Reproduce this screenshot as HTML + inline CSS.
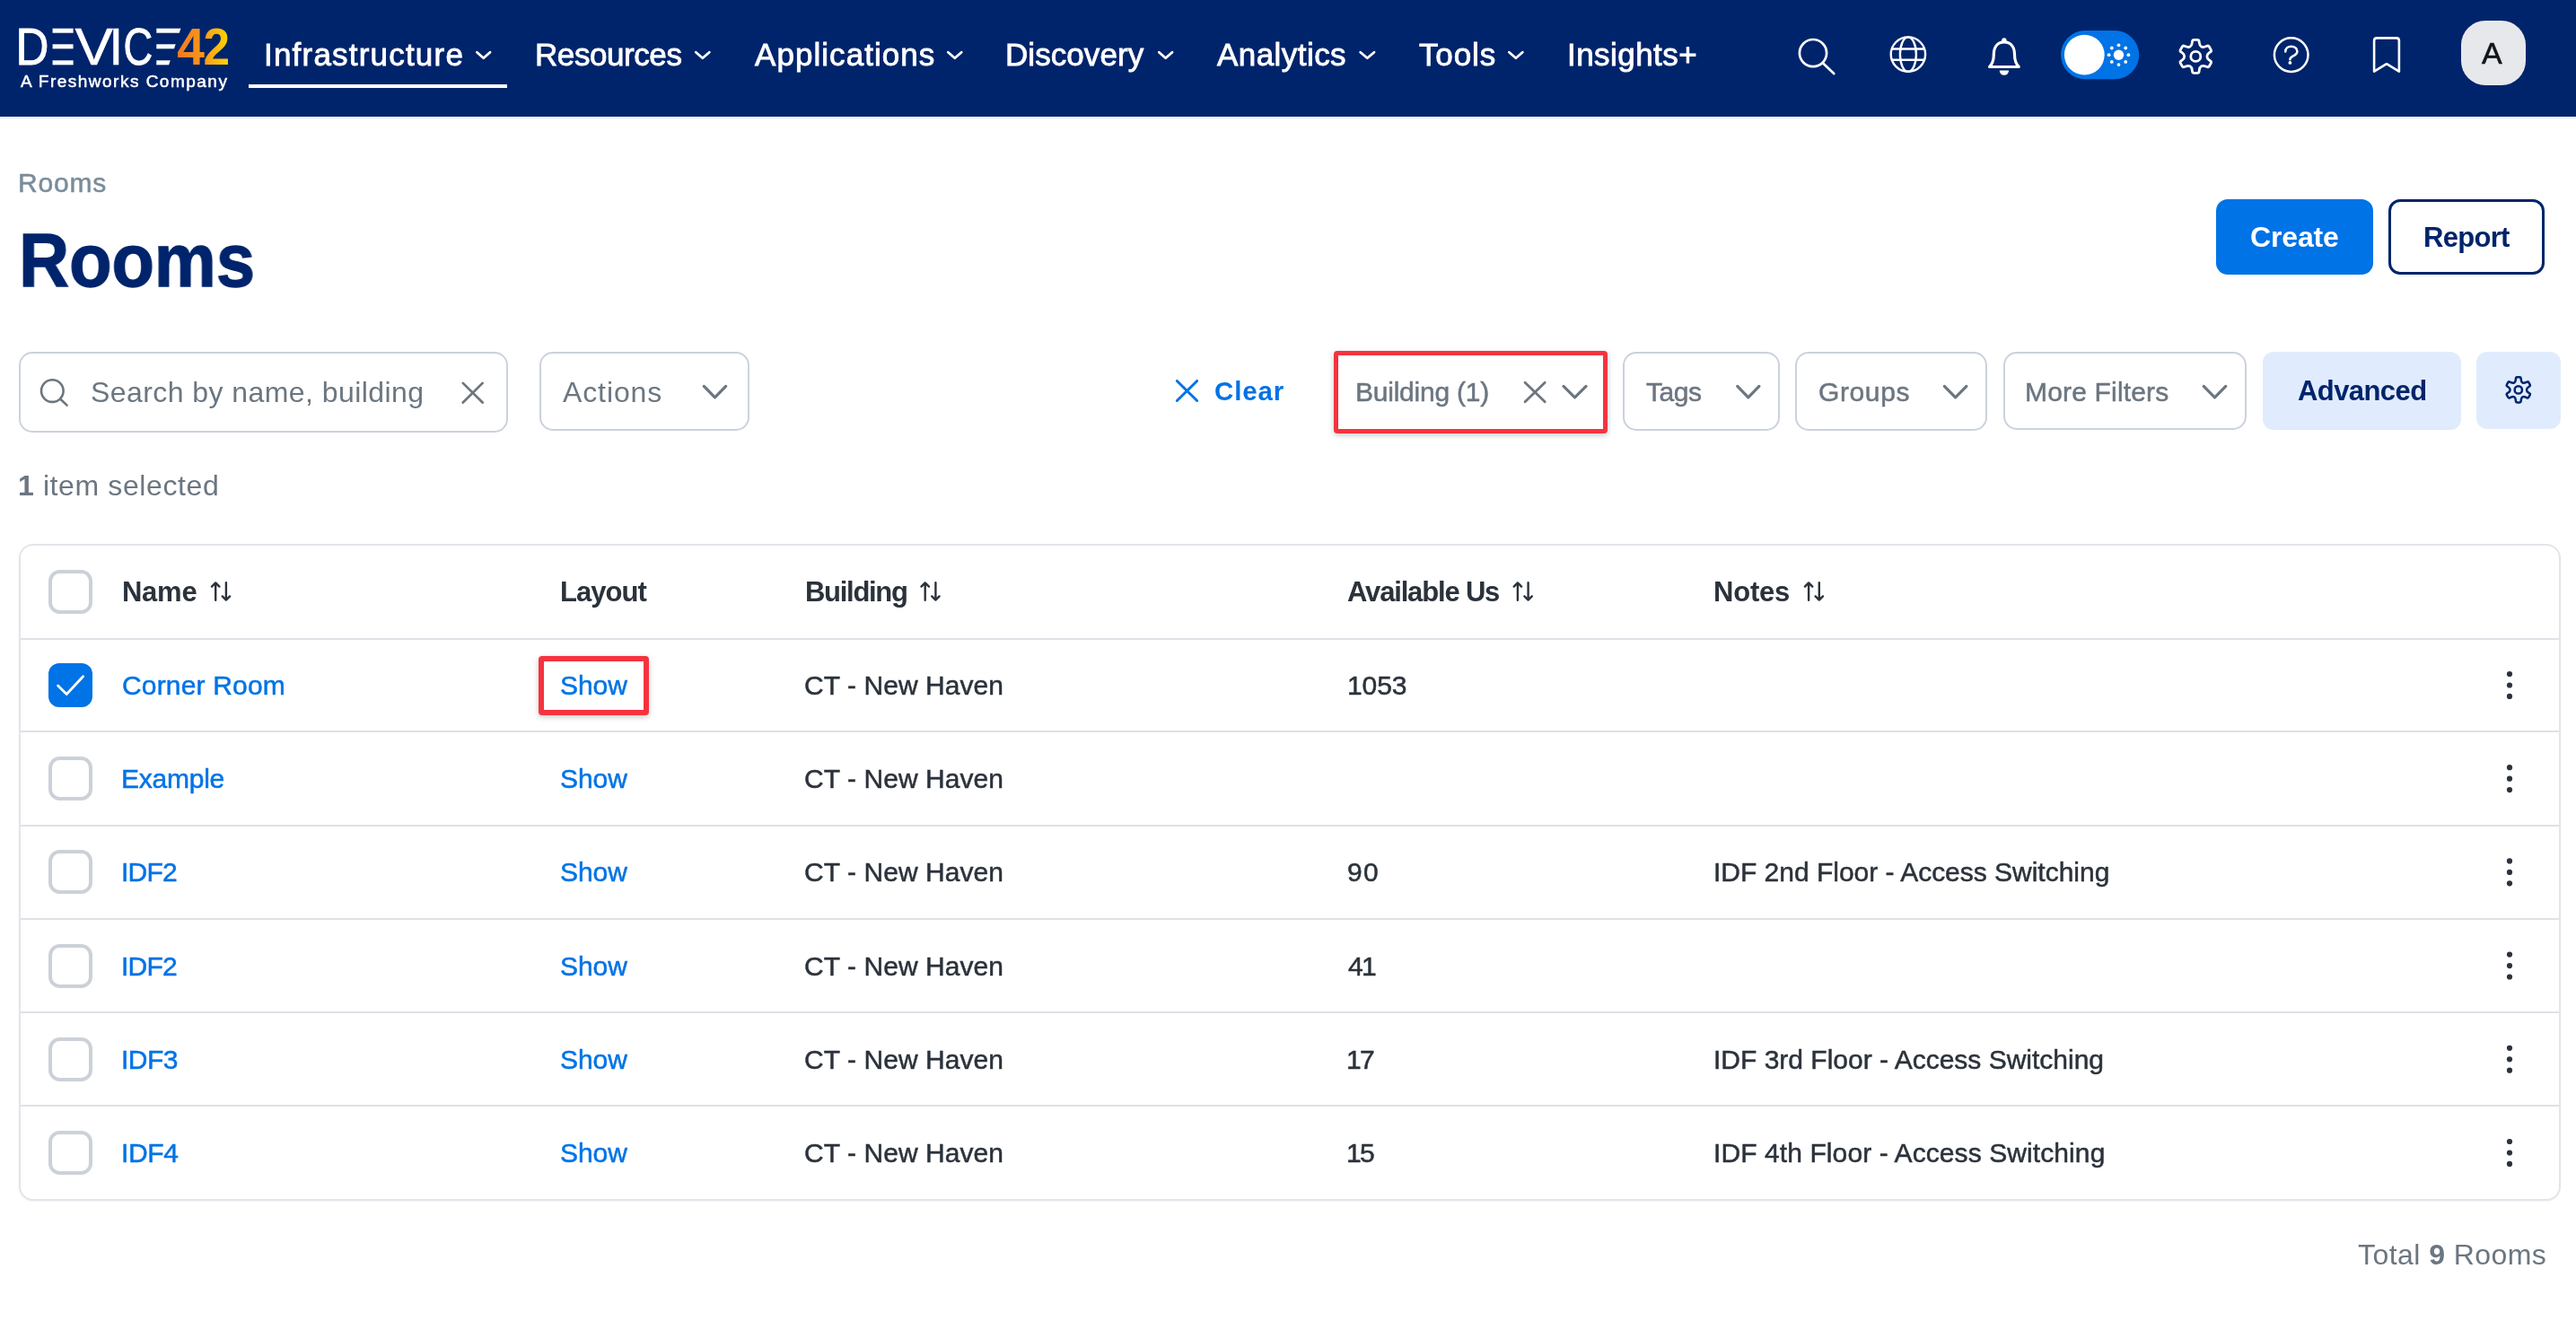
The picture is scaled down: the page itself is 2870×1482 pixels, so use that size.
<!DOCTYPE html>
<html lang="en"><head><meta charset="utf-8"><title>Rooms - Device42</title>
<style>
html,body{margin:0;padding:0}
body{width:2870px;height:1482px;position:relative;overflow:hidden;background:#fff;font-family:"Liberation Sans",sans-serif;}
.t{position:absolute;white-space:nowrap;line-height:1;margin:0;padding:0;will-change:transform}
.t b{font-weight:700}
.abs{position:absolute}
svg{position:absolute;overflow:visible;will-change:transform}
</style></head>
<body>
<header class="abs" style="left:0;top:0;width:2870px;height:130px;background:#00246b;border-bottom:1px solid #eef0f1;box-shadow:0 1px 0 #dee2e7;box-sizing:content-box">
<a class="abs" style="left:0;top:0"><svg style="left:0;top:0" width="300" height="130" viewBox="0 0 300 130" role="img" aria-label="DEVICE42"><defs><linearGradient id="lg42" gradientUnits="userSpaceOnUse" x1="198" y1="0" x2="254" y2="0"><stop offset="0" stop-color="#f47920"/><stop offset="0.5" stop-color="#f8981d"/><stop offset="1" stop-color="#ffd400"/></linearGradient><clipPath id="cE1"><rect x="58.6" y="28" width="23.0" height="48"/></clipPath><clipPath id="cE2"><polygon points="174.3,28 202.6,28 186.9,76 174.3,76"/></clipPath></defs><g id="logo-word"><text x="17.50" y="72.1" font-family="Liberation Sans, sans-serif" font-size="58.2" fill="#fff" textLength="36.95" lengthAdjust="spacingAndGlyphs" stroke="#fff" stroke-width="0.9">D</text><g clip-path="url(#cE1)"><text x="46.97" y="72.1" font-family="Liberation Sans, sans-serif" font-size="58.2" fill="#fff" textLength="40.08" lengthAdjust="spacingAndGlyphs" stroke="#fff" stroke-width="0.45">E</text></g><text x="83.62" y="72.1" font-family="Liberation Sans, sans-serif" font-size="58.2" fill="#fff" textLength="42.46" lengthAdjust="spacingAndGlyphs" stroke="#fff" stroke-width="0.45">V</text><text x="121.26" y="72.1" font-family="Liberation Sans, sans-serif" font-size="58.2" fill="#fff" textLength="16.09" lengthAdjust="spacingAndGlyphs" stroke="#fff" stroke-width="0.45">I</text><text x="137.50" y="72.1" font-family="Liberation Sans, sans-serif" font-size="58.2" fill="#fff" textLength="32.73" lengthAdjust="spacingAndGlyphs" stroke="#fff" stroke-width="0.9">C</text><g clip-path="url(#cE2)"><text x="161.32" y="72.1" font-family="Liberation Sans, sans-serif" font-size="58.2" fill="#fff" textLength="44.80" lengthAdjust="spacingAndGlyphs" stroke="#fff" stroke-width="0.45">E</text></g><text x="197.17" y="72.1" font-family="Liberation Sans, sans-serif" font-size="58.2" font-weight="700" fill="url(#lg42)" textLength="30.63" lengthAdjust="spacingAndGlyphs">4</text><text x="226.46" y="72.1" font-family="Liberation Sans, sans-serif" font-size="58.2" font-weight="700" fill="url(#lg42)" textLength="29.57" lengthAdjust="spacingAndGlyphs">2</text></g></svg><span class="t" id="tag" style="left:23.30px;top:80.92px;font-size:19px;font-weight:400;color:#fff;letter-spacing:1.484px;-webkit-text-stroke:0.5px #fff;">A Freshworks Company</span></a>
<nav>
<span class="t" id="nav0" style="left:294.15px;top:42.57px;font-size:35px;font-weight:400;color:#fff;letter-spacing:1.206px;-webkit-text-stroke:0.85px #fff;">Infrastructure</span>
<svg style="left:0;top:0" width="1" height="1"><path d="M531.38 58.28 L538.70 64.80 L546.02 58.28" fill="none" stroke="#fff" stroke-width="2.8" stroke-linecap="round" stroke-linejoin="round"/></svg>
<span class="t" id="nav1" style="left:596.29px;top:42.57px;font-size:35px;font-weight:400;color:#fff;letter-spacing:-0.424px;-webkit-text-stroke:0.85px #fff;">Resources</span>
<svg style="left:0;top:0" width="1" height="1"><path d="M775.28 58.28 L782.80 64.80 L790.32 58.28" fill="none" stroke="#fff" stroke-width="2.8" stroke-linecap="round" stroke-linejoin="round"/></svg>
<span class="t" id="nav2" style="left:840.64px;top:42.57px;font-size:35px;font-weight:400;color:#fff;letter-spacing:1.057px;-webkit-text-stroke:0.85px #fff;">Applications</span>
<svg style="left:0;top:0" width="1" height="1"><path d="M1056.28 58.28 L1063.75 64.80 L1071.22 58.28" fill="none" stroke="#fff" stroke-width="2.8" stroke-linecap="round" stroke-linejoin="round"/></svg>
<span class="t" id="nav3" style="left:1120.09px;top:42.57px;font-size:35px;font-weight:400;color:#fff;letter-spacing:0.066px;-webkit-text-stroke:0.85px #fff;">Discovery</span>
<svg style="left:0;top:0" width="1" height="1"><path d="M1291.28 58.28 L1298.65 64.80 L1306.02 58.28" fill="none" stroke="#fff" stroke-width="2.8" stroke-linecap="round" stroke-linejoin="round"/></svg>
<span class="t" id="nav4" style="left:1355.94px;top:42.57px;font-size:35px;font-weight:400;color:#fff;letter-spacing:0.446px;-webkit-text-stroke:0.85px #fff;">Analytics</span>
<svg style="left:0;top:0" width="1" height="1"><path d="M1515.68 58.28 L1523.35 64.80 L1531.02 58.28" fill="none" stroke="#fff" stroke-width="2.8" stroke-linecap="round" stroke-linejoin="round"/></svg>
<span class="t" id="nav5" style="left:1580.87px;top:42.57px;font-size:35px;font-weight:400;color:#fff;letter-spacing:0.861px;-webkit-text-stroke:0.85px #fff;">Tools</span>
<svg style="left:0;top:0" width="1" height="1"><path d="M1681.38 58.28 L1688.85 64.80 L1696.32 58.28" fill="none" stroke="#fff" stroke-width="2.8" stroke-linecap="round" stroke-linejoin="round"/></svg>
<span class="t" id="nav6" style="left:1745.75px;top:42.57px;font-size:35px;font-weight:400;color:#fff;letter-spacing:0.446px;-webkit-text-stroke:0.85px #fff;">Insights+</span>
<div class="abs" style="left:277px;top:94px;width:288px;height:4px;background:#fff"></div>
</nav>
<svg style="left:0;top:0" width="2870" height="130" viewBox="0 0 2870 130"><g fill="none" stroke="#fff" stroke-width="2.7" stroke-linecap="round"><circle cx="2020" cy="59.1" r="15.1"/><path d="M2031.2 70.6 L2043.2 82"/></g><g fill="none" stroke="#fff" stroke-width="2.4"><circle cx="2125.9" cy="60.6" r="19.2"/><ellipse cx="2125.9" cy="60.6" rx="9.0" ry="19.2"/><path d="M2107.9 54.5 H2143.9 M2107.9 66.7 H2143.9"/></g><g fill="none" stroke="#fff" stroke-width="3.2" stroke-linejoin="round" stroke-linecap="round"><path d="M2232.9 46.8 C2224.7000000000003 46.8 2221.3 53.5 2221.3 61 C2221.3 68.5 2219.6 71.5 2216.6 74.5 H2249.2000000000003 C2246.2000000000003 71.5 2244.5 68.5 2244.5 61 C2244.5 53.5 2241.1 46.8 2232.9 46.8 Z"/></g><circle cx="2232.9" cy="45.0" r="2.7" fill="#fff"/><path d="M2227.7000000000003 78.6 A5.2 5.2 0 0 0 2238.1 78.6 Z" fill="#fff"/><rect x="2296" y="34" width="87.2" height="54.2" rx="27.1" fill="#0073e6"/><circle cx="2322.3" cy="61.1" r="22.4" fill="#fff"/><circle cx="2360.5" cy="61.2" r="5.7" fill="#fff"/><circle cx="2371.40" cy="61.20" r="1.9" fill="#fff"/><circle cx="2368.21" cy="68.91" r="1.9" fill="#fff"/><circle cx="2360.50" cy="72.10" r="1.9" fill="#fff"/><circle cx="2352.79" cy="68.91" r="1.9" fill="#fff"/><circle cx="2349.60" cy="61.20" r="1.9" fill="#fff"/><circle cx="2352.79" cy="53.49" r="1.9" fill="#fff"/><circle cx="2360.50" cy="50.30" r="1.9" fill="#fff"/><circle cx="2368.21" cy="53.49" r="1.9" fill="#fff"/><circle cx="2552.7" cy="61.1" r="18.8" fill="none" stroke="#fff" stroke-width="2.5"/><path d="M2546.3 57.4 C2546.3 53.9 2549.2 51.7 2552.8 51.7 C2556.5 51.7 2559.4 54.1 2559.4 57.3 C2559.4 60.1 2557.3 61.3 2555.0 62.4 C2552.6 63.6 2551.4 64.4 2551.4 66.2" fill="none" stroke="#fff" stroke-width="2.5" stroke-linecap="round"/><circle cx="2551.4" cy="69.9" r="1.9" fill="#fff"/><path d="M2645.1 79.6 V45.4 Q2645.1 42.4 2648.1 42.4 H2669.9 Q2672.9 42.4 2672.9 45.4 V79.6 L2659.0 71.2 Z" fill="none" stroke="#fff" stroke-width="2.6" stroke-linejoin="round"/></svg><svg style="left:0;top:0" width="1" height="1"><path d="M2440.00 51.99 Q2441.96 50.86 2442.32 47.68 L2442.49 46.14 Q2442.68 44.45 2444.38 44.45 L2448.22 44.45 Q2449.92 44.45 2450.11 46.14 L2450.28 47.68 Q2450.64 50.86 2452.60 51.99 L2452.60 51.99 Q2454.56 53.12 2457.49 51.84 L2458.91 51.22 Q2460.47 50.54 2461.32 52.01 L2463.24 55.34 Q2464.09 56.81 2462.72 57.82 L2461.47 58.74 Q2458.90 60.63 2458.90 62.90 L2458.90 62.90 Q2458.90 65.17 2461.47 67.06 L2462.72 67.98 Q2464.09 68.99 2463.24 70.46 L2461.32 73.79 Q2460.47 75.26 2458.91 74.58 L2457.49 73.96 Q2454.56 72.68 2452.60 73.81 L2452.60 73.81 Q2450.64 74.94 2450.28 78.12 L2450.11 79.66 Q2449.92 81.35 2448.22 81.35 L2444.38 81.35 Q2442.68 81.35 2442.49 79.66 L2442.32 78.12 Q2441.96 74.94 2440.00 73.81 L2440.00 73.81 Q2438.04 72.68 2435.11 73.96 L2433.69 74.58 Q2432.13 75.26 2431.28 73.79 L2429.36 70.46 Q2428.51 68.99 2429.88 67.98 L2431.13 67.06 Q2433.70 65.17 2433.70 62.90 L2433.70 62.90 Q2433.70 60.63 2431.13 58.74 L2429.88 57.82 Q2428.51 56.81 2429.36 55.34 L2431.28 52.01 Q2432.13 50.54 2433.69 51.22 L2435.11 51.84 Q2438.04 53.12 2440.00 51.99 Z" fill="none" stroke="#fff" stroke-width="2.8" stroke-linejoin="round"/><circle cx="2446.3" cy="62.9" r="5.5" fill="none" stroke="#fff" stroke-width="2.8"/></svg>
<div class="abs" style="left:2741.5px;top:22.5px;width:72.00px;height:72.00px;box-sizing:border-box;padding:0;margin:0;border:0 none;background:#e6e8ec;border-radius:27px;"></div>
<span class="t" id="avatar" style="left:2765.47px;top:42.32px;font-size:34px;font-weight:400;color:#12161c;letter-spacing:0.000px;-webkit-text-stroke:0.6px #12161c;">A</span>
</header>
<main>
<span class="t" id="crumb" style="left:20.31px;top:189.30px;font-size:30px;font-weight:400;color:#7a8c99;letter-spacing:0.796px;-webkit-text-stroke:0.5px #7a8c99;">Rooms</span>
<h1 style="margin:0;font-size:inherit;font-weight:inherit"><span class="t" id="title" style="left:21.29px;top:248.19px;font-size:84px;font-weight:700;color:#00246b;letter-spacing:0.000px;-webkit-text-stroke:1.3px #00246b;transform-origin:0 0;transform:scaleX(0.9238);">Rooms</span></h1>
<button class="abs btn" style="left:2469px;top:222px;width:175.00px;height:84.00px;box-sizing:border-box;padding:0;margin:0;border:0 none;background:#0073e6;border-radius:13px;"></button>
<span class="t" id="create" style="left:2506.75px;top:248.01px;font-size:32px;font-weight:700;color:#fff;letter-spacing:-0.140px;">Create</span>
<button class="abs btn" style="left:2661px;top:222px;width:174.00px;height:84.00px;box-sizing:border-box;padding:0;margin:0;border:0 none;background:#fff;border:3px solid #00246b;border-radius:13px;"></button>
<span class="t" id="report" style="left:2699.66px;top:248.86px;font-size:31px;font-weight:700;color:#00246b;letter-spacing:-0.705px;">Report</span>
<div class="abs" style="left:21px;top:392px;width:545.00px;height:90.00px;box-sizing:border-box;padding:0;margin:0;border:0 none;border:2px solid #cbd2dc;border-radius:15px;background:#fff;"></div>
<svg style="left:0;top:0" width="1" height="1"><g fill="none" stroke="#6b7680" stroke-width="2.6" stroke-linecap="round"><circle cx="58.3" cy="435.6" r="12.3"/><path d="M67.4 444.8 L74.6 451.6"/></g></svg>
<span class="t" id="ph" style="left:100.53px;top:421.21px;font-size:32px;font-weight:400;color:#6b7680;letter-spacing:0.433px;">Search by name, building</span>
<svg style="left:0;top:0" width="1" height="1"><path d="M515.78 426.88 L537.62 448.52 M537.62 426.88 L515.78 448.52" fill="none" stroke="#6b7680" stroke-width="2.8" stroke-linecap="round"/></svg>
<div class="abs" style="left:601px;top:392px;width:234.00px;height:88.00px;box-sizing:border-box;padding:0;margin:0;border:0 none;border:2px solid #cbd2dc;border-radius:15px;background:#fff;"></div>
<span class="t" id="actions" style="left:626.78px;top:421.21px;font-size:32px;font-weight:400;color:#6b7680;letter-spacing:0.883px;">Actions</span>
<svg style="left:0;top:0" width="1" height="1"><path d="M784.32 430.42 L796.50 442.80 L808.68 430.42" fill="none" stroke="#6b7680" stroke-width="3.2" stroke-linecap="round" stroke-linejoin="round"/></svg>
<svg style="left:0;top:0" width="1" height="1"><path d="M1311.35 424.45 L1333.65 446.45 M1333.65 424.45 L1311.35 446.45" fill="none" stroke="#0073e6" stroke-width="3.0" stroke-linecap="round"/></svg>
<span class="t" id="clear" style="left:1353.19px;top:420.73px;font-size:29.5px;font-weight:700;color:#0073e6;letter-spacing:0.875px;">Clear</span>
<div class="abs" style="left:1485.5px;top:390.5px;width:305.00px;height:92.00px;box-sizing:border-box;padding:0;margin:0;border:0 none;border:5.5px solid #f5333f;border-radius:4px;background:#fff;box-shadow:0 2px 6px rgba(0,0,0,.22);"></div>
<span class="t" id="fbuilding" style="left:1510.01px;top:422.11px;font-size:30px;font-weight:400;color:#6b7680;letter-spacing:-0.234px;-webkit-text-stroke:0.5px #6b7680;">Building (1)</span>
<svg style="left:0;top:0" width="1" height="1"><path d="M1699.08 426.18 L1721.22 447.82 M1721.22 426.18 L1699.08 447.82" fill="none" stroke="#6b7680" stroke-width="2.8" stroke-linecap="round"/></svg>
<svg style="left:0;top:0" width="1" height="1"><path d="M1742.02 430.42 L1754.55 442.80 L1767.08 430.42" fill="none" stroke="#6b7680" stroke-width="3.2" stroke-linecap="round" stroke-linejoin="round"/></svg>
<div class="abs" style="left:1808px;top:392px;width:174.50px;height:88.00px;box-sizing:border-box;padding:0;margin:0;border:0 none;border:2px solid #cbd2dc;border-radius:15px;background:#fff;"></div>
<span class="t" id="ftags" style="left:1833.57px;top:422.11px;font-size:30px;font-weight:400;color:#6b7680;letter-spacing:-0.461px;-webkit-text-stroke:0.5px #6b7680;">Tags</span>
<svg style="left:0;top:0" width="1" height="1"><path d="M1935.72 430.42 L1947.80 442.80 L1959.88 430.42" fill="none" stroke="#6b7680" stroke-width="3.2" stroke-linecap="round" stroke-linejoin="round"/></svg>
<div class="abs" style="left:2000.4px;top:392px;width:213.20px;height:88.00px;box-sizing:border-box;padding:0;margin:0;border:0 none;border:2px solid #cbd2dc;border-radius:15px;background:#fff;"></div>
<span class="t" id="fgroups" style="left:2025.76px;top:422.11px;font-size:30px;font-weight:400;color:#6b7680;letter-spacing:0.620px;-webkit-text-stroke:0.5px #6b7680;">Groups</span>
<svg style="left:0;top:0" width="1" height="1"><path d="M2166.32 430.42 L2178.60 442.80 L2190.88 430.42" fill="none" stroke="#6b7680" stroke-width="3.2" stroke-linecap="round" stroke-linejoin="round"/></svg>
<div class="abs" style="left:2232.4px;top:392px;width:270.60px;height:87.00px;box-sizing:border-box;padding:0;margin:0;border:0 none;border:2px solid #cbd2dc;border-radius:15px;background:#fff;"></div>
<span class="t" id="fmore" style="left:2255.51px;top:422.11px;font-size:30px;font-weight:400;color:#6b7680;letter-spacing:0.176px;-webkit-text-stroke:0.5px #6b7680;">More Filters</span>
<svg style="left:0;top:0" width="1" height="1"><path d="M2455.22 430.42 L2467.50 442.80 L2479.78 430.42" fill="none" stroke="#6b7680" stroke-width="3.2" stroke-linecap="round" stroke-linejoin="round"/></svg>
<div class="abs" style="left:2521px;top:392px;width:221.00px;height:87.00px;box-sizing:border-box;padding:0;margin:0;border:0 none;background:#e0ecfd;border-radius:12px;"></div>
<span class="t" id="adv" style="left:2559.92px;top:419.56px;font-size:31px;font-weight:700;color:#00246b;letter-spacing:-0.575px;">Advanced</span>
<div class="abs" style="left:2759.2px;top:392px;width:93.90px;height:85.50px;box-sizing:border-box;padding:0;margin:0;border:0 none;background:#e0ecfd;border-radius:12px;"></div>
<svg style="left:0;top:0" width="1" height="1"><path d="M2801.20 426.43 Q2802.63 425.60 2802.82 423.11 L2802.94 421.61 Q2803.04 420.32 2804.34 420.32 L2807.26 420.32 Q2808.56 420.32 2808.66 421.61 L2808.78 423.11 Q2808.97 425.60 2810.40 426.43 L2810.40 426.43 Q2811.84 427.26 2814.09 426.18 L2815.44 425.53 Q2816.61 424.97 2817.26 426.09 L2818.73 428.63 Q2819.38 429.75 2818.30 430.49 L2817.07 431.33 Q2815.00 432.74 2815.00 434.40 L2815.00 434.40 Q2815.00 436.06 2817.07 437.47 L2818.30 438.31 Q2819.38 439.05 2818.73 440.17 L2817.26 442.71 Q2816.61 443.83 2815.44 443.27 L2814.09 442.62 Q2811.84 441.54 2810.40 442.37 L2810.40 442.37 Q2808.97 443.20 2808.78 445.69 L2808.66 447.19 Q2808.56 448.48 2807.26 448.48 L2804.34 448.48 Q2803.04 448.48 2802.94 447.19 L2802.82 445.69 Q2802.63 443.20 2801.20 442.37 L2801.20 442.37 Q2799.76 441.54 2797.51 442.62 L2796.16 443.27 Q2794.99 443.83 2794.34 442.71 L2792.87 440.17 Q2792.22 439.05 2793.30 438.31 L2794.53 437.47 Q2796.60 436.06 2796.60 434.40 L2796.60 434.40 Q2796.60 432.74 2794.53 431.33 L2793.30 430.49 Q2792.22 429.75 2792.87 428.63 L2794.34 426.09 Q2794.99 424.97 2796.16 425.53 L2797.51 426.18 Q2799.76 427.26 2801.20 426.43 Z" fill="none" stroke="#00246b" stroke-width="2.5" stroke-linejoin="round"/><circle cx="2805.8" cy="434.4" r="4.15" fill="none" stroke="#00246b" stroke-width="2.5"/></svg>
<span class="t" id="sel" style="left:19.55px;top:525.01px;font-size:32px;font-weight:400;color:#6b7680;letter-spacing:0.605px;"><b>1</b> item selected</span>
<div class="abs" style="left:21px;top:606px;width:2832.00px;height:732.00px;box-sizing:border-box;padding:0;margin:0;border:0 none;border:2px solid #e2e5ea;border-radius:16px;background:#fff;box-shadow:0 1px 2px rgba(20,30,50,.06);"></div>
<div class="abs" style="left:23px;top:711px;width:2828px;height:2px;background:#dee1e6"></div>
<div class="abs" style="left:23px;top:814px;width:2828px;height:2px;background:#dee1e6"></div>
<div class="abs" style="left:23px;top:919px;width:2828px;height:2px;background:#dee1e6"></div>
<div class="abs" style="left:23px;top:1023px;width:2828px;height:2px;background:#dee1e6"></div>
<div class="abs" style="left:23px;top:1127px;width:2828px;height:2px;background:#dee1e6"></div>
<div class="abs" style="left:23px;top:1231px;width:2828px;height:2px;background:#dee1e6"></div>
<div class="abs" style="left:54px;top:635px;width:49.00px;height:49.00px;box-sizing:border-box;padding:0;margin:0;border:0 none;border:4px solid #ccd1d9;border-radius:12.5px;background:#fff;"></div>
<span class="t" id="hname" style="left:135.86px;top:643.76px;font-size:31px;font-weight:700;color:#2b323b;letter-spacing:-0.268px;">Name</span>
<svg style="left:0;top:0" width="1" height="1"><g fill="none" stroke="#2b323b" stroke-width="2.4" stroke-linecap="round" stroke-linejoin="round"><path d="M240.2 668.8 V649.4000000000001 M236.0 653.6 L240.2 649.4000000000001 L244.39999999999998 653.6"/><path d="M251.9 649.2 V668.5999999999999 M247.70000000000002 664.4 L251.9 668.5999999999999 L256.1 664.4"/></g></svg>
<span class="t" id="hlayout" style="left:623.96px;top:643.76px;font-size:31px;font-weight:700;color:#2b323b;letter-spacing:-0.970px;">Layout</span>
<span class="t" id="hbuilding" style="left:896.86px;top:643.76px;font-size:31px;font-weight:700;color:#2b323b;letter-spacing:-1.289px;">Building</span>
<svg style="left:0;top:0" width="1" height="1"><g fill="none" stroke="#2b323b" stroke-width="2.4" stroke-linecap="round" stroke-linejoin="round"><path d="M1030.7 668.8 V649.4000000000001 M1026.5 653.6 L1030.7 649.4000000000001 L1034.9 653.6"/><path d="M1042.4 649.2 V668.5999999999999 M1038.2 664.4 L1042.4 668.5999999999999 L1046.6000000000001 664.4"/></g></svg>
<span class="t" id="havail" style="left:1501.42px;top:643.76px;font-size:31px;font-weight:700;color:#2b323b;letter-spacing:-1.169px;">Available Us</span>
<svg style="left:0;top:0" width="1" height="1"><g fill="none" stroke="#2b323b" stroke-width="2.4" stroke-linecap="round" stroke-linejoin="round"><path d="M1690.9 668.8 V649.4000000000001 M1686.7 653.6 L1690.9 649.4000000000001 L1695.1000000000001 653.6"/><path d="M1702.6000000000001 649.2 V668.5999999999999 M1698.4 664.4 L1702.6000000000001 668.5999999999999 L1706.8000000000002 664.4"/></g></svg>
<span class="t" id="hnotes" style="left:1909.26px;top:643.76px;font-size:31px;font-weight:700;color:#2b323b;letter-spacing:-0.217px;">Notes</span>
<svg style="left:0;top:0" width="1" height="1"><g fill="none" stroke="#2b323b" stroke-width="2.4" stroke-linecap="round" stroke-linejoin="round"><path d="M2015.1000000000001 668.8 V649.4000000000001 M2010.9 653.6 L2015.1000000000001 649.4000000000001 L2019.3000000000002 653.6"/><path d="M2026.8000000000002 649.2 V668.5999999999999 M2022.6000000000001 664.4 L2026.8000000000002 668.5999999999999 L2031.0000000000002 664.4"/></g></svg>
<div class="abs" style="left:54px;top:739.0px;width:49.00px;height:49.00px;box-sizing:border-box;padding:0;margin:0;border:0 none;background:#0073e6;border-radius:12px;"></div>
<svg style="left:0;top:0" width="1" height="1"><path d="M64.6 764.1 L74.2 773.5 L92.6 753.7" fill="none" stroke="#fff" stroke-width="2.8" stroke-linecap="round" stroke-linejoin="round"/></svg>
<div class="abs" style="left:600.3px;top:731px;width:122.70px;height:66.00px;box-sizing:border-box;padding:0;margin:0;border:0 none;border:6px solid #f5333f;border-radius:4px;background:#fff;box-shadow:0 2px 6px rgba(0,0,0,.22);"></div>
<span class="t" id="name0" style="left:136.14px;top:748.90px;font-size:30px;font-weight:400;color:#0073e6;letter-spacing:0.178px;-webkit-text-stroke:0.5px #0073e6;">Corner Room</span>
<span class="t" id="show0" style="left:623.74px;top:748.90px;font-size:30px;font-weight:400;color:#0073e6;letter-spacing:-0.043px;-webkit-text-stroke:0.5px #0073e6;">Show</span>
<span class="t" id="bld0" style="left:895.74px;top:748.90px;font-size:30px;font-weight:400;color:#2b323b;letter-spacing:0.065px;-webkit-text-stroke:0.5px #2b323b;">CT - New Haven</span>
<span class="t" id="av0" style="left:1500.69px;top:748.90px;font-size:30px;font-weight:400;color:#2b323b;letter-spacing:-0.099px;-webkit-text-stroke:0.5px #2b323b;">1053</span>
<svg style="left:0;top:0" width="1" height="1"><circle cx="2796" cy="751.0" r="3.1" fill="#2b323b"/><circle cx="2796" cy="763.5" r="3.1" fill="#2b323b"/><circle cx="2796" cy="775.9" r="3.1" fill="#2b323b"/></svg>
<div class="abs" style="left:54px;top:843.2px;width:49.00px;height:49.00px;box-sizing:border-box;padding:0;margin:0;border:0 none;border:4px solid #ccd1d9;border-radius:12.5px;background:#fff;"></div>
<span class="t" id="name1" style="left:134.91px;top:853.11px;font-size:30px;font-weight:400;color:#0073e6;letter-spacing:-0.240px;-webkit-text-stroke:0.5px #0073e6;">Example</span>
<span class="t" id="show1" style="left:623.74px;top:853.11px;font-size:30px;font-weight:400;color:#0073e6;letter-spacing:-0.043px;-webkit-text-stroke:0.5px #0073e6;">Show</span>
<span class="t" id="bld1" style="left:895.74px;top:853.11px;font-size:30px;font-weight:400;color:#2b323b;letter-spacing:0.065px;-webkit-text-stroke:0.5px #2b323b;">CT - New Haven</span>
<svg style="left:0;top:0" width="1" height="1"><circle cx="2796" cy="855.2" r="3.1" fill="#2b323b"/><circle cx="2796" cy="867.7" r="3.1" fill="#2b323b"/><circle cx="2796" cy="880.1" r="3.1" fill="#2b323b"/></svg>
<div class="abs" style="left:54px;top:947.4px;width:49.00px;height:49.00px;box-sizing:border-box;padding:0;margin:0;border:0 none;border:4px solid #ccd1d9;border-radius:12.5px;background:#fff;"></div>
<span class="t" id="name2" style="left:134.65px;top:957.30px;font-size:30px;font-weight:400;color:#0073e6;letter-spacing:-0.788px;-webkit-text-stroke:0.5px #0073e6;">IDF2</span>
<span class="t" id="show2" style="left:623.74px;top:957.30px;font-size:30px;font-weight:400;color:#0073e6;letter-spacing:-0.043px;-webkit-text-stroke:0.5px #0073e6;">Show</span>
<span class="t" id="bld2" style="left:895.74px;top:957.30px;font-size:30px;font-weight:400;color:#2b323b;letter-spacing:0.065px;-webkit-text-stroke:0.5px #2b323b;">CT - New Haven</span>
<span class="t" id="av2" style="left:1500.69px;top:957.30px;font-size:30px;font-weight:400;color:#2b323b;letter-spacing:1.200px;-webkit-text-stroke:0.5px #2b323b;">90</span>
<span class="t" id="nt2" style="left:1908.65px;top:957.30px;font-size:30px;font-weight:400;color:#2b323b;letter-spacing:-0.016px;-webkit-text-stroke:0.5px #2b323b;">IDF 2nd Floor - Access Switching</span>
<svg style="left:0;top:0" width="1" height="1"><circle cx="2796" cy="959.4" r="3.1" fill="#2b323b"/><circle cx="2796" cy="971.9" r="3.1" fill="#2b323b"/><circle cx="2796" cy="984.3" r="3.1" fill="#2b323b"/></svg>
<div class="abs" style="left:54px;top:1051.6px;width:49.00px;height:49.00px;box-sizing:border-box;padding:0;margin:0;border:0 none;border:4px solid #ccd1d9;border-radius:12.5px;background:#fff;"></div>
<span class="t" id="name3" style="left:134.65px;top:1061.50px;font-size:30px;font-weight:400;color:#0073e6;letter-spacing:-0.788px;-webkit-text-stroke:0.5px #0073e6;">IDF2</span>
<span class="t" id="show3" style="left:623.74px;top:1061.50px;font-size:30px;font-weight:400;color:#0073e6;letter-spacing:-0.043px;-webkit-text-stroke:0.5px #0073e6;">Show</span>
<span class="t" id="bld3" style="left:895.74px;top:1061.50px;font-size:30px;font-weight:400;color:#2b323b;letter-spacing:0.065px;-webkit-text-stroke:0.5px #2b323b;">CT - New Haven</span>
<span class="t" id="av3" style="left:1501.71px;top:1061.50px;font-size:30px;font-weight:400;color:#2b323b;letter-spacing:-1.600px;-webkit-text-stroke:0.5px #2b323b;">41</span>
<svg style="left:0;top:0" width="1" height="1"><circle cx="2796" cy="1063.6" r="3.1" fill="#2b323b"/><circle cx="2796" cy="1076.1" r="3.1" fill="#2b323b"/><circle cx="2796" cy="1088.5" r="3.1" fill="#2b323b"/></svg>
<div class="abs" style="left:54px;top:1155.8px;width:49.00px;height:49.00px;box-sizing:border-box;padding:0;margin:0;border:0 none;border:4px solid #ccd1d9;border-radius:12.5px;background:#fff;"></div>
<span class="t" id="name4" style="left:134.65px;top:1165.70px;font-size:30px;font-weight:400;color:#0073e6;letter-spacing:-0.512px;-webkit-text-stroke:0.5px #0073e6;">IDF3</span>
<span class="t" id="show4" style="left:623.74px;top:1165.70px;font-size:30px;font-weight:400;color:#0073e6;letter-spacing:-0.043px;-webkit-text-stroke:0.5px #0073e6;">Show</span>
<span class="t" id="bld4" style="left:895.74px;top:1165.70px;font-size:30px;font-weight:400;color:#2b323b;letter-spacing:0.065px;-webkit-text-stroke:0.5px #2b323b;">CT - New Haven</span>
<span class="t" id="av4" style="left:1499.99px;top:1165.70px;font-size:30px;font-weight:400;color:#2b323b;letter-spacing:-1.600px;-webkit-text-stroke:0.5px #2b323b;">17</span>
<span class="t" id="nt4" style="left:1908.65px;top:1165.70px;font-size:30px;font-weight:400;color:#2b323b;letter-spacing:-0.004px;-webkit-text-stroke:0.5px #2b323b;">IDF 3rd Floor - Access Switching</span>
<svg style="left:0;top:0" width="1" height="1"><circle cx="2796" cy="1167.8" r="3.1" fill="#2b323b"/><circle cx="2796" cy="1180.3" r="3.1" fill="#2b323b"/><circle cx="2796" cy="1192.7" r="3.1" fill="#2b323b"/></svg>
<div class="abs" style="left:54px;top:1260.0px;width:49.00px;height:49.00px;box-sizing:border-box;padding:0;margin:0;border:0 none;border:4px solid #ccd1d9;border-radius:12.5px;background:#fff;"></div>
<span class="t" id="name5" style="left:134.65px;top:1269.90px;font-size:30px;font-weight:400;color:#0073e6;letter-spacing:-0.365px;-webkit-text-stroke:0.5px #0073e6;">IDF4</span>
<span class="t" id="show5" style="left:623.74px;top:1269.90px;font-size:30px;font-weight:400;color:#0073e6;letter-spacing:-0.043px;-webkit-text-stroke:0.5px #0073e6;">Show</span>
<span class="t" id="bld5" style="left:895.74px;top:1269.90px;font-size:30px;font-weight:400;color:#2b323b;letter-spacing:0.065px;-webkit-text-stroke:0.5px #2b323b;">CT - New Haven</span>
<span class="t" id="av5" style="left:1499.99px;top:1269.90px;font-size:30px;font-weight:400;color:#2b323b;letter-spacing:-1.600px;-webkit-text-stroke:0.5px #2b323b;">15</span>
<span class="t" id="nt5" style="left:1908.65px;top:1269.90px;font-size:30px;font-weight:400;color:#2b323b;letter-spacing:0.092px;-webkit-text-stroke:0.5px #2b323b;">IDF 4th Floor - Access Switching</span>
<svg style="left:0;top:0" width="1" height="1"><circle cx="2796" cy="1272.0" r="3.1" fill="#2b323b"/><circle cx="2796" cy="1284.5" r="3.1" fill="#2b323b"/><circle cx="2796" cy="1296.9" r="3.1" fill="#2b323b"/></svg>
<span class="t" id="total" style="left:2626.80px;top:1381.91px;font-size:32px;font-weight:400;color:#6b7680;letter-spacing:0.443px;">Total <b>9</b> Rooms</span>
</main>
</body></html>
